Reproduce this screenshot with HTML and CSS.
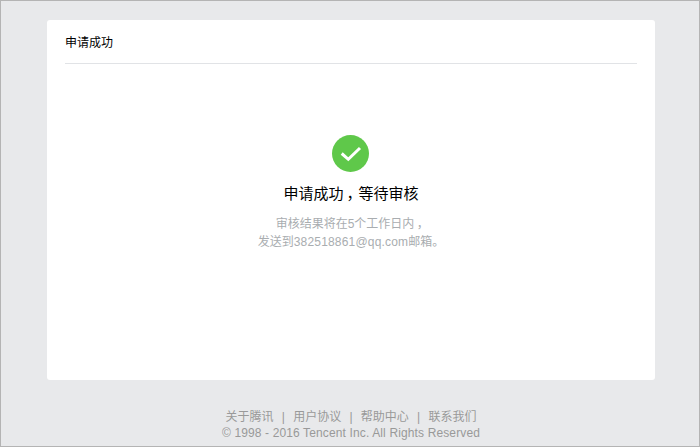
FILE: index.html
```html
<!DOCTYPE html>
<html lang="zh-CN">
<head>
    <meta charset="UTF-8">
    <title>申请成功</title>
    <link rel="stylesheet" href="styles.css">
</head>
<body>
    <div class="page">
        <div class="card">
            <div class="card-title">申请成功</div>
            <div class="result">
                <svg class="result-icon" width="37" height="37" viewBox="0 0 37 37">
                    <circle cx="18.5" cy="18.5" r="18.5" fill="#5fc84a"/>
                    <path d="M9.7 18.5l6.6 5.8L28 13" fill="none" stroke="#fff" stroke-width="3"/>
                </svg>
                <h2 class="result-title">申请成功<span class="punct">，</span>等待审核</h2>
                <p class="result-desc">审核结果将在5个工作日内<span class="punct">，</span><br>发送到<span class="latin">382518861@qq.com</span>邮箱。</p>
            </div>
        </div>
        <div class="footer">
            <div class="footer-links">
                <a>关于腾讯</a><span class="sep">|</span><a>用户协议</a><span class="sep">|</span><a>帮助中心</a><span class="sep">|</span><a>联系我们</a>
            </div>
            <div class="copyright">© 1998 - 2016 Tencent Inc. All Rights Reserved</div>
        </div>
    </div>
</body>
</html>
```
FILE: styles.css
```css
html, body {
    margin: 0;
    padding: 0;
}
body {
    font-family: "Liberation Sans", "Noto Sans CJK SC", sans-serif;
}
.page {
    box-sizing: border-box;
    width: 700px;
    height: 447px;
    padding: 19px 44px 0 46px;
    overflow: hidden;
    background-color: #e8e9eb;
    border: 1px solid #b4b4b4;
}
.card {
    box-sizing: border-box;
    height: 360px;
    padding: 0 18px;
    background-color: #fff;
    border-radius: 3px;
}
.card-title {
    height: 39px;
    padding-top: 4px;
    line-height: 39px;
    font-size: 12px;
    color: #000;
    border-bottom: 1px solid #e1e3e6;
}
.result {
    display: flex;
    flex-direction: column;
    align-items: center;
    padding-top: 71px;
}
.result-icon {
    display: block;
    margin-left: -1px;
}
.result-title {
    margin: 10px 0 0;
    line-height: 24px;
    font-size: 15px;
    font-weight: normal;
    color: #000;
}
/* the comma sits in the middle of its cell, not on the left */
.punct {
    padding-left: 0.2em;
    letter-spacing: -0.2em;
}
.result-desc {
    margin: 9px 0 0;
    line-height: 18px;
    font-size: 12px;
    color: #a9adb0;
    text-align: center;
}
.latin {
    letter-spacing: 0.19px;
}
.footer {
    padding-top: 29px;
    text-align: center;
    font-size: 12px;
    color: #999;
}
.footer-links {
    line-height: 16px;
}
.sep {
    margin: 0 8.25px;
}
.copyright {
    line-height: 16px;
    letter-spacing: 0.13px;
}
```
